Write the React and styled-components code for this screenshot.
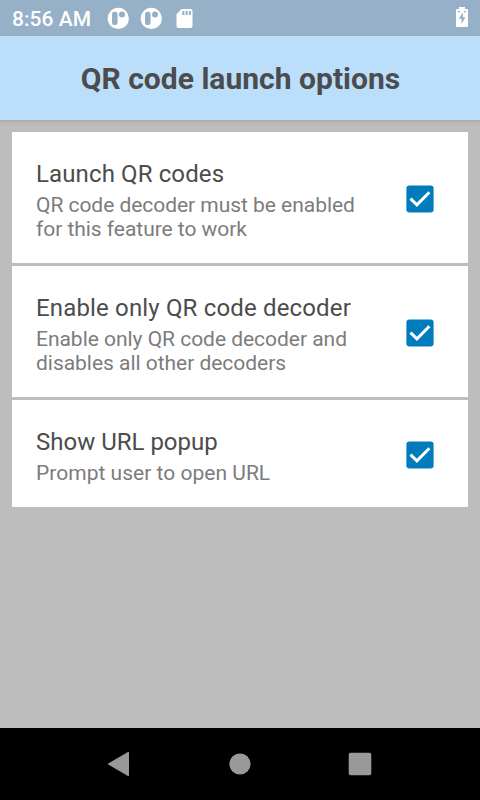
import React from "react";
import styled, { createGlobalStyle } from "styled-components";

const GlobalStyle = createGlobalStyle`
  * { box-sizing: border-box; }
  body { margin: 0; font-family: Roboto, "Noto Sans", sans-serif; }
  svg { display: block; flex: none; }
`;

const Screen = styled.div`
  width: 480px;
  height: 800px;
  display: flex;
  flex-direction: column;
  overflow: hidden;
  background: #bdbdbd;
`;

const StatusBar = styled.div`
  height: 36px;
  flex: none;
  display: flex;
  align-items: center;
  justify-content: space-between;
  padding: 0 10px 0 12px;
  background: #95b0c7;
  color: #fff;
`;

const StatusGroup = styled.div`
  display: flex;
  align-items: center;
`;

const Clock = styled.span`
  width: 94px;
  padding-top: 2px;
  font-size: 21px;
  line-height: 24px;
  font-weight: 500;
  letter-spacing: 0.06px;
  white-space: nowrap;
`;

const Header = styled.header`
  height: 84px;
  flex: none;
  display: flex;
  align-items: center;
  justify-content: center;
  background: #bbdefb;
`;

const HeaderTitle = styled.h1`
  margin: 0;
  padding: 2px 0 0 1px;
  font-size: 30px;
  line-height: 36px;
  font-weight: 700;
  letter-spacing: 0.02px;
  color: #4c4c4c;
  white-space: nowrap;
`;

const List = styled.main`
  flex: 1;
  display: flex;
  flex-direction: column;
  gap: 3px;
  padding: 12px;
  background: linear-gradient(#a9a9a9, #b9b9b9 3px, #bdbdbd 8px);
`;

const Card = styled.section`
  display: flex;
  align-items: center;
  justify-content: space-between;
  padding: 28px 30px 22px 24px;
  background: #fff;
`;

const OptionTitle = styled.h2`
  margin: 0 0 5px;
  font-size: 24px;
  line-height: 28px;
  font-weight: 400;
  letter-spacing: ${(p) => p.$tracking}px;
  color: #4c4c4c;
`;

const OptionText = styled.p`
  margin: 0;
  font-size: 21px;
  line-height: 24px;
  letter-spacing: ${(p) => p.$tracking}px;
  color: #7c7c7c;
  white-space: pre-line;
`;

const CheckSlot = styled.div`
  padding-bottom: 7px;
`;

const NavBar = styled.nav`
  height: 72px;
  flex: none;
  display: flex;
  align-items: center;
  justify-content: center;
  gap: 84px;
  background: #000;
`;

const NotificationIcon = () => (
  <svg width="33" height="24" viewBox="0 0 33 24">
    <circle cx="12.3" cy="12.4" r="10.6" fill="#fff" />
    <rect x="6" y="5.8" width="5.6" height="13.2" rx="2.3" fill="#95b0c7" />
    <circle cx="16" cy="8.6" r="3" fill="#95b0c7" />
  </svg>
);

const SdIcon = () => (
  <svg width="24" height="24" viewBox="0 0 24 24">
    <path
      fill="#fff"
      d="M9.5 3H18.5a2 2 0 0 1 2 2V20a2 2 0 0 1-2 2H6.5a2 2 0 0 1-2-2V8.2Z"
    />
    <path stroke="#95b0c7" strokeWidth="2" d="M11.3 5v4M14.6 5v4M17.8 5v4" />
  </svg>
);

const BatteryIcon = () => (
  <svg width="16" height="24" viewBox="0 0 16 24">
    <path
      fill="#fff"
      d="M5 1h6v2h2a1 1 0 0 1 1 1V20a1 1 0 0 1-1 1H3a1 1 0 0 1-1-1V4a1 1 0 0 1 1-1h2Z"
    />
    <path fill="#95b0c7" d="M8.8 6.2 4.9 12.8H7.6V18L11.3 11.2H8.8ZM4 5h2v1.2H4ZM10 5h2v1.2h-2Z" />
  </svg>
);

const CheckedBox = () => (
  <svg width="36" height="36" viewBox="0 0 36 36" role="img" aria-label="Checked">
    <rect x="4.4" y="6.4" width="27.2" height="27.2" rx="3" fill="#007cbc" />
    <path d="M8.5 19.6 14.9 25.8 27.4 13.3" fill="none" stroke="#fff" strokeWidth="3" />
  </svg>
);

const options = [
  {
    title: "Launch QR codes",
    text: "QR code decoder must be enabled\nfor this feature to work",
    titleTracking: 0.12,
    textTracking: -0.04,
  },
  {
    title: "Enable only QR code decoder",
    text: "Enable only QR code decoder and\ndisables all other decoders",
    titleTracking: 0.16,
    textTracking: -0.03,
  },
  {
    title: "Show URL popup",
    text: "Prompt user to open URL",
    titleTracking: 0,
    textTracking: 0.02,
  },
];

export default function App() {
  return (
    <Screen>
      <GlobalStyle />
      <StatusBar>
        <StatusGroup>
          <Clock>8:56 AM</Clock>
          <NotificationIcon />
          <NotificationIcon />
          <SdIcon />
        </StatusGroup>
        <BatteryIcon />
      </StatusBar>
      <Header>
        <HeaderTitle>QR code launch options</HeaderTitle>
      </Header>
      <List>
        {options.map((option) => (
          <Card key={option.title}>
            <div>
              <OptionTitle $tracking={option.titleTracking}>{option.title}</OptionTitle>
              <OptionText $tracking={option.textTracking}>{option.text}</OptionText>
            </div>
            <CheckSlot>
              <CheckedBox />
            </CheckSlot>
          </Card>
        ))}
      </List>
      <NavBar>
        <svg width="36" height="36" viewBox="0 0 36 36">
          <path
            d="M6.6 18 26.3 6.7V29.3Z"
            fill="#999"
            stroke="#999"
            strokeWidth="1.4"
            strokeLinejoin="round"
          />
        </svg>
        <svg width="36" height="36" viewBox="0 0 36 36">
          <circle cx="18" cy="18" r="10.6" fill="#999" />
        </svg>
        <svg width="36" height="36" viewBox="0 0 36 36">
          <rect x="6.7" y="6.7" width="22.6" height="22.6" rx="2" fill="#999" />
        </svg>
      </NavBar>
    </Screen>
  );
}
